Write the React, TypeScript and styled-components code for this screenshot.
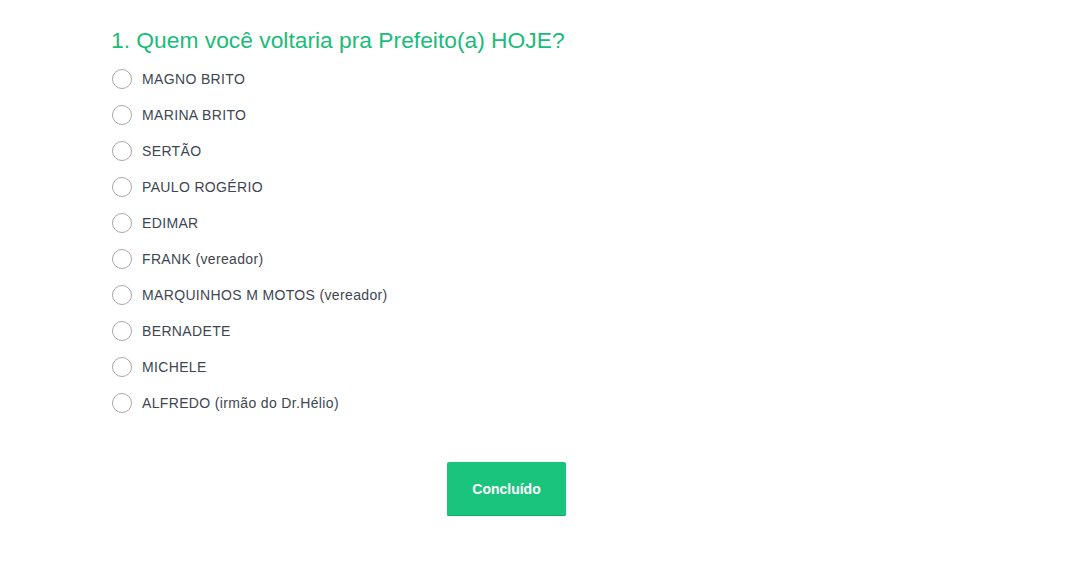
import React from "react";
import styled, { createGlobalStyle } from "styled-components";

const GlobalStyle = createGlobalStyle`
  body {
    margin: 0;
    background: #ffffff;
    font-family: "Liberation Sans", Arial, sans-serif;
  }
`;

const Page = styled.div`
  padding: 24px 0 0 111px;
  width: 791px;
`;

const Title = styled.h2`
  margin: 0 0 5px 0;
  font-weight: 400;
  font-size: 22.8px;
  line-height: 32px;
  color: #1abc7b;
`;

const Options = styled.div`
  display: flex;
  flex-direction: column;
  padding-left: 1px;
`;

const Option = styled.label`
  display: flex;
  align-items: center;
  gap: 10px;
  height: 36px;
  cursor: pointer;
`;

const Radio = styled.span`
  box-sizing: border-box;
  width: 20px;
  height: 20px;
  border: 1.5px solid #a8a8a8;
  border-radius: 50%;
  flex-shrink: 0;
`;

const OptionText = styled.span`
  font-size: 14px;
  color: #3e4650;
  letter-spacing: 0.35px;
`;

const Footer = styled.div`
  display: flex;
  justify-content: center;
  margin-top: 41px;
`;

const Button = styled.button`
  width: 119px;
  height: 54px;
  border: none;
  border-radius: 2px;
  background: #1bc47d;
  color: #ffffff;
  font-family: "Liberation Sans", Arial, sans-serif;
  font-size: 14px;
  font-weight: 700;
  box-shadow: 0 3px 0 #e6e6e6, inset 0 -1px 0 #14a96a;
  cursor: pointer;
`;

const options = [
  "MAGNO BRITO",
  "MARINA BRITO",
  "SERTÃO",
  "PAULO ROGÉRIO",
  "EDIMAR",
  "FRANK (vereador)",
  "MARQUINHOS M MOTOS (vereador)",
  "BERNADETE",
  "MICHELE",
  "ALFREDO (irmão do Dr.Hélio)",
];

export default function App() {
  return (
    <>
      <GlobalStyle />
      <Page>
        <Title>1. Quem você voltaria pra Prefeito(a) HOJE?</Title>
        <Options>
          {options.map((o) => (
            <Option key={o}>
              <Radio />
              <OptionText>{o}</OptionText>
            </Option>
          ))}
        </Options>
        <Footer>
          <Button>Concluído</Button>
        </Footer>
      </Page>
    </>
  );
}
